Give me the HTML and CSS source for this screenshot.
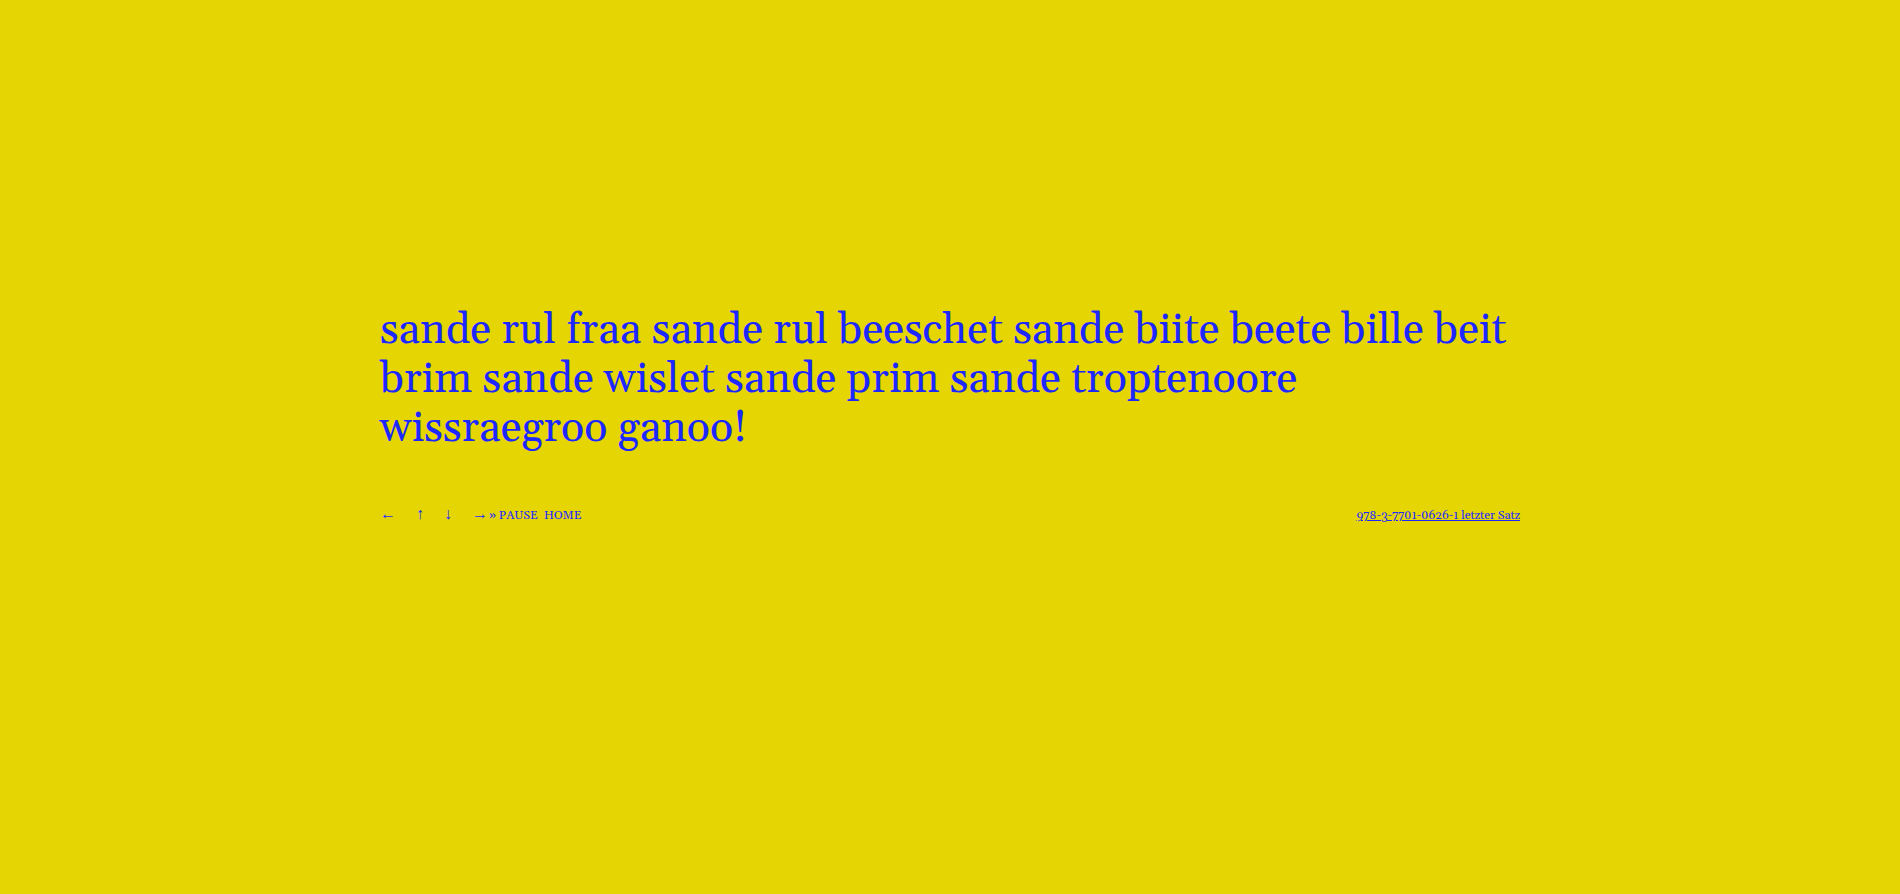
FILE: index.html
```
<!DOCTYPE html>
<html lang="de">
<head>
  <meta charset="UTF-8" />
  <title>letzter Satz</title>
  <meta name="viewport" content="width=device-width, initial-scale=1.0" />
  <link rel="stylesheet" href="styles.css">
</head>
<body>
  <main class="container">
    <p class="satz">sande rul fraa sande rul beeschet sande biite beete bille beit brim sande wislet sande prim sande troptenoore wissraegroo ganoo!</p>

    <div class="bar">
      <nav class="nav">
        <div class="arrows">
          <a href="#prev">←</a>
          <a href="#up">↑</a>
          <a href="#down">↓</a>
          <a href="#next">→</a>
        </div>
        <a class="pause" href="#pause">» PAUSE</a>
        <a href="#home">HOME</a>
      </nav>
      <a class="source" href="#source">978-3-7701-0626-1 letzter Satz</a>
    </div>
  </main>
</body>
</html>
```

FILE: styles.css
```
body {
  margin: 0;
  background: #e5d503;
  color: #1c28ff;
  font-family: Georgia, Gelasio, "Liberation Serif", serif;
}

.container {
  width: 60%;
  margin: 0 auto;
  padding-top: 306px;
}

.satz {
  margin: 0 0 53px;
  font-size: 43px;
  line-height: 49px;
}

.bar {
  display: flex;
  justify-content: space-between;
  font-size: 12px;
  line-height: 20px;
}

.nav {
  display: flex;
}

.bar a {
  color: #1c28ff;
  text-decoration: none;
}

.arrows {
  display: flex;
  gap: 20px;
  margin-right: 1px;
  font-family: "Liberation Serif", serif;
  font-size: 16px;
  line-height: 16px;
}

.nav .pause {
  margin-right: 6px;
}

.bar .source {
  text-decoration: underline;
}
```
